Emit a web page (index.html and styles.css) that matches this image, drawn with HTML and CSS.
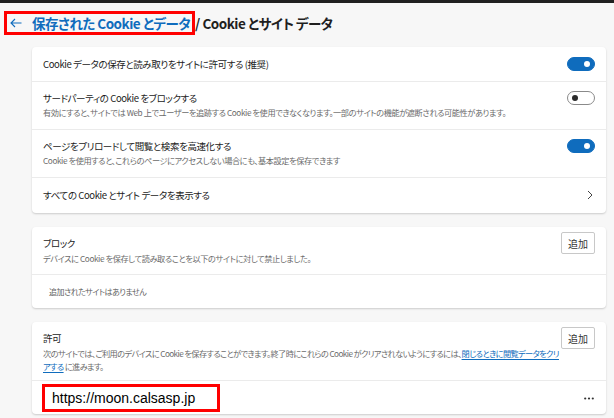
FILE: index.html
```html
<!DOCTYPE html>
<html lang="ja">

<head>
  <meta charset="UTF-8">
  <meta name="viewport" content="width=device-width, initial-scale=1.0">
  <title>Cookie とサイト データ</title>
  <link rel="stylesheet" href="styles.css">
</head>

<body>
  <div class="topbar"></div>

  <header class="page-header">
    <h1 class="crumbs">
      <a class="crumb-back" href="#">
        <svg class="icon-back" width="12" height="10" viewBox="0 0 12 10">
          <path d="M11.5 5H1M5 1L1 5l4 4" fill="none" stroke="currentColor" stroke-width="1.1"/>
        </svg>
        <span>保存された Cookie とデータ</span>
      </a>
      <span class="crumb-current">/ Cookie とサイト データ</span>
    </h1>
  </header>

  <main class="content">
    <section class="card">
      <div class="row">
        <div class="row-text">
          <p class="row-title">Cookie データの保存と読み取りをサイトに許可する (推奨)</p>
        </div>
        <span class="toggle on"></span>
      </div>
      <div class="row">
        <div class="row-text">
          <p class="row-title">サードパーティの Cookie をブロックする</p>
          <p class="row-desc">有効にすると、サイトでは Web 上でユーザーを追跡する Cookie を使用できなくなります。一部のサイトの機能が遮断される可能性があります。</p>
        </div>
        <span class="toggle"></span>
      </div>
      <div class="row">
        <div class="row-text">
          <p class="row-title">ページをプリロードして閲覧と検索を高速化する</p>
          <p class="row-desc">Cookie を使用すると、これらのページにアクセスしない場合にも、基本設定を保存できます</p>
        </div>
        <span class="toggle on"></span>
      </div>
      <div class="row row-link">
        <div class="row-text">
          <p class="row-title">すべての Cookie とサイト データを表示する</p>
        </div>
        <svg class="chevron" width="6" height="10" viewBox="0 0 6 10">
          <path d="M1 1l4 4-4 4" fill="none" stroke="#444" stroke-width="1"/>
        </svg>
      </div>
    </section>

    <section class="card">
      <div class="list-head">
        <div class="row-text">
          <p class="row-title">ブロック</p>
          <p class="row-desc">デバイスに Cookie を保存して読み取ることを以下のサイトに対して禁止しました。</p>
        </div>
        <button class="btn-add" type="button">追加</button>
      </div>
      <div class="row row-empty">
        <p>追加されたサイトはありません</p>
      </div>
    </section>

    <section class="card">
      <div class="list-head">
        <div class="row-text">
          <p class="row-title">許可</p>
          <p class="row-desc nowrap">次のサイトでは、ご利用のデバイスに Cookie を保存することができます。終了時にこれらの Cookie がクリアされないようにするには、<a href="#">閉じるときに閲覧データをクリ<br>アする</a> に進みます。</p>
        </div>
        <button class="btn-add" type="button">追加</button>
      </div>
      <div class="row row-site">
        <span class="site-url">https://moon.calsasp.jp</span>
        <svg class="more" width="10" height="3" viewBox="0 0 10 3">
          <circle cx="1.2" cy="1.5" r="1.1" fill="#333"/>
          <circle cx="5" cy="1.5" r="1.1" fill="#333"/>
          <circle cx="8.8" cy="1.5" r="1.1" fill="#333"/>
        </svg>
      </div>
    </section>
  </main>
</body>

</html>
```

FILE: styles.css
```css
* {
  margin: 0;
  padding: 0;
  box-sizing: border-box;
}

body {
  background: #f7f7f7;
  color: #1b1b1b;
  font-family: 'Noto Sans CJK JP', sans-serif;
  font-feature-settings: "palt";
}

.topbar {
  height: 3px;
  background: #202020;
}

.page-header {
  height: 44px;
  padding: 8px 0 0 4px;
}

.crumbs {
  display: flex;
  align-items: center;
  font-size: 13.5px;
  font-weight: 600;
  line-height: 18px;
  letter-spacing: -0.5px;
}

.crumb-back {
  display: flex;
  align-items: center;
  gap: 10px;
  padding: 0 2px 0 3px;
  border: 3px solid #f00;
  color: #0f6cbd;
  text-decoration: none;
}

.crumb-current {
  color: #1f1f1f;
}

.content {
  padding: 0 8px 0 32px;
}

.card {
  background: #fff;
  border-radius: 4px;
  box-shadow: 0 1px 2px rgba(0, 0, 0, .18);
  margin-bottom: 14px;
}

.row {
  display: flex;
  align-items: flex-start;
  padding: 9px 11px;
  border-top: 1px solid #ebebeb;
}

.card > .row:first-child {
  padding: 10px 11px;
  border-top: 0;
}

.row-text {
  flex: 1;
  min-width: 0;
}

.row-title {
  font-size: 9.5px;
  line-height: 14px;
  letter-spacing: -0.4px;
}

.row-desc {
  font-size: 8.2px;
  line-height: 15px;
  letter-spacing: -0.4px;
  color: #6b6b6b;
}

.nowrap {
  white-space: nowrap;
}

.row-desc a {
  color: #0f6cbd;
  text-decoration: underline;
  text-underline-offset: 2px;
}

.toggle {
  position: relative;
  flex-shrink: 0;
  width: 28px;
  height: 14px;
  border-radius: 7px;
  border: 1px solid #8a8a8a;
  background: #fff;
}

.toggle::after {
  content: '';
  position: absolute;
  top: 3px;
  left: 4px;
  width: 6px;
  height: 6px;
  border-radius: 50%;
  background: #2b2b2b;
}

.toggle.on {
  background: #0f6cbd;
  border-color: #0f6cbd;
}

.toggle.on::after {
  left: auto;
  right: 4px;
  background: #fff;
}

.row-link {
  align-items: center;
  padding: 10px 13px 11px 11px;
}

.list-head {
  display: flex;
  align-items: flex-start;
  padding: 5px 11px 8px;
}

.list-head .row-text {
  padding-top: 4px;
}

.list-head .row-desc {
  margin-top: 1px;
}

.card:last-child .row-desc {
  line-height: 13px;
  margin-top: 2px;
  letter-spacing: -0.6px;
}

.card:last-child .list-head {
  padding-bottom: 7px;
}

.btn-add {
  flex-shrink: 0;
  width: 34px;
  height: 22px;
  background: #fff;
  border: 1px solid #c8c8c8;
  border-radius: 2px;
  color: #333;
  font-family: inherit;
  font-size: 10px;
}

.row-empty {
  padding: 10px 17px 9px;
  font-size: 8px;
  line-height: 14px;
  letter-spacing: -0.5px;
  color: #616161;
}

.row-site {
  align-items: center;
  padding: 3px 12px 2px 10px;
  justify-content: space-between;
}

.site-url {
  border: 3px solid #f00;
  padding: 0 22px 0 7px;
  font-family: 'Liberation Sans', sans-serif;
  font-size: 14px;
  line-height: 22px;
  color: #000;
}
```
